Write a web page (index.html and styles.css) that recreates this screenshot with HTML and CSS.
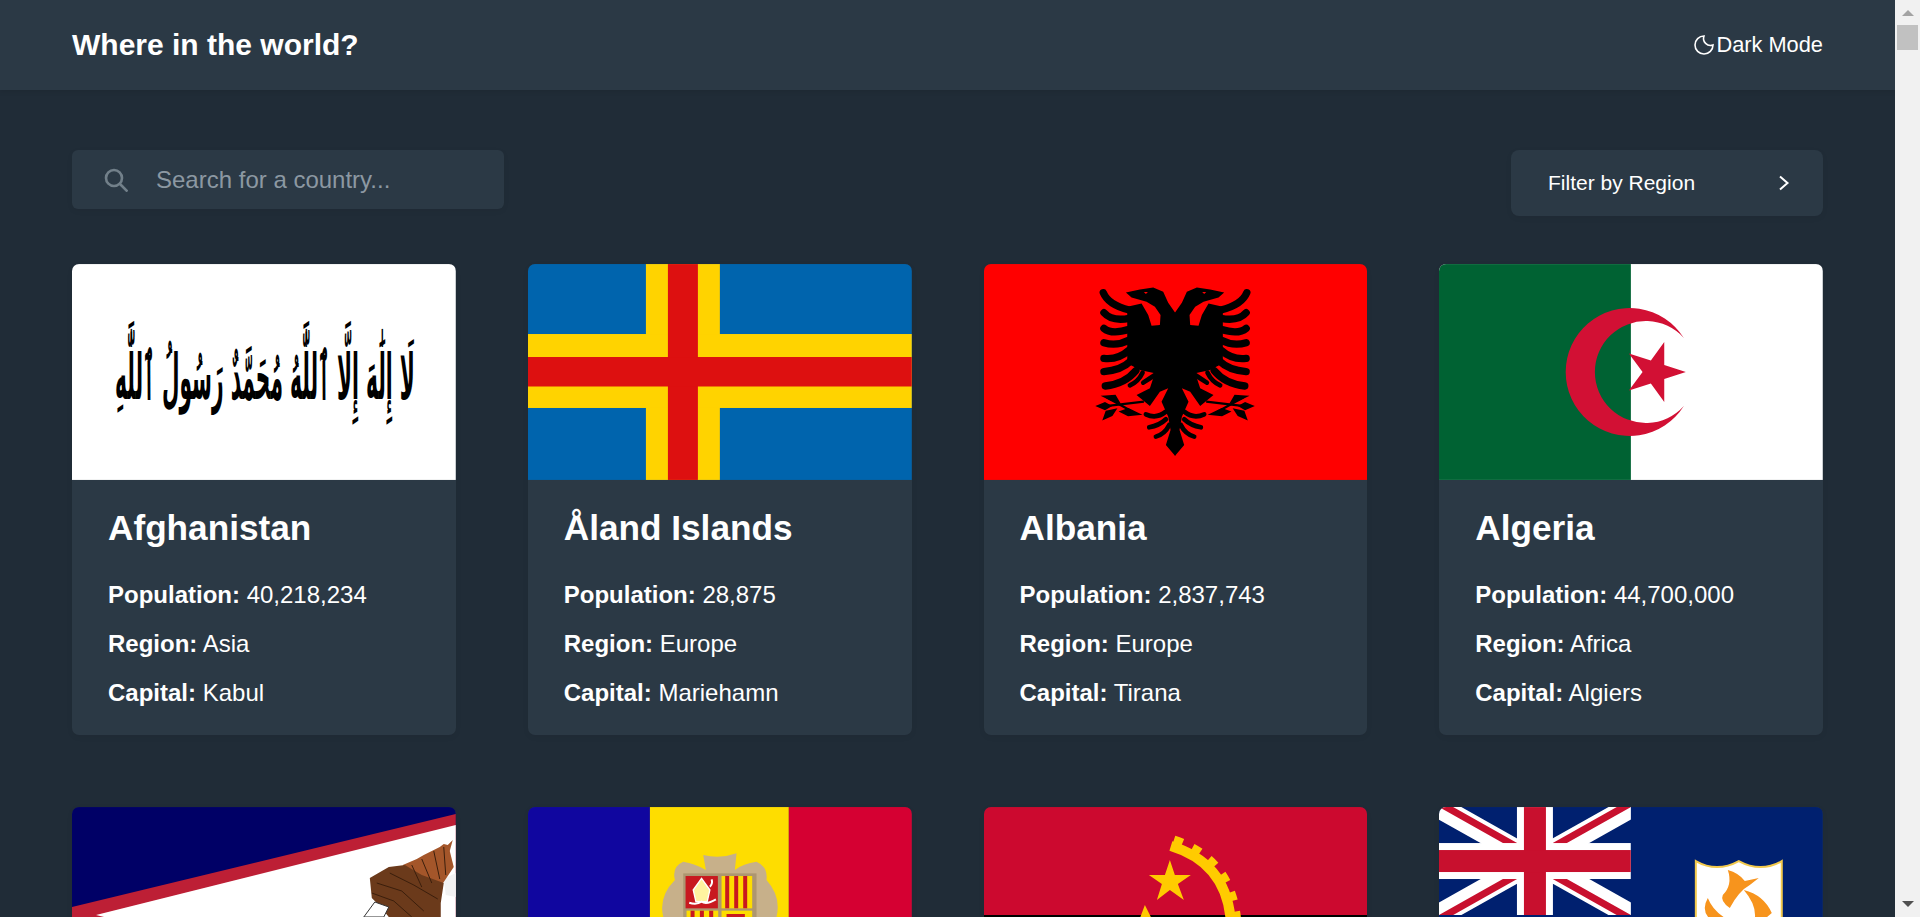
FILE: index.html
```html
<!DOCTYPE html>
<html lang="en">
<head>
<meta charset="utf-8">
<title>Where in the world?</title>
<link rel="stylesheet" href="styles.css">
</head>
<body>
<div class="page">
  <header class="header">
    <h1 class="brand">Where in the world?</h1>
    <button class="mode" type="button">
      <svg class="moon" viewBox="2 2 20 20" aria-hidden="true"><path d="M12 3a9 9 0 1 0 9 9 7 7 0 0 1-9-9z"/></svg>
      <span>Dark Mode</span>
    </button>
  </header>
  <main class="main">
    <div class="toolbar">
      <label class="search">
        <svg class="search-icon" viewBox="0 0 24 24" aria-hidden="true"><circle cx="10" cy="10" r="8"/><path d="M16 16l7.500 7.500"/></svg>
        <input class="search-input" type="text" placeholder="Search for a country...">
      </label>
      <button class="filter" type="button">
        <span>Filter by Region</span>
        <svg class="chevron" viewBox="0 0 12 16" aria-hidden="true"><path d="M2 1.500 9.500 8 2 14.500"/></svg>
      </button>
    </div>
    <section class="grid">

      <article class="card">
        <svg class="flag" viewBox="0 0 384 216" aria-hidden="true">
          <rect width="384" height="216" fill="#fff"/>
          <text class="shahada" text-anchor="middle" textLength="300" lengthAdjust="spacingAndGlyphs" transform="translate(193 135) scale(1 2.120)" direction="rtl">لَا إِلَٰهَ إِلَّا ٱللَّٰهُ مُحَمَّدٌ رَسُولُ ٱللَّٰهِ</text>
        </svg>
        <div class="info">
          <h2 class="name">Afghanistan</h2>
          <p class="row"><b>Population:</b> 40,218,234</p>
          <p class="row"><b>Region:</b> Asia</p>
          <p class="row"><b>Capital:</b> Kabul</p>
        </div>
      </article>

      <article class="card">
        <svg class="flag" viewBox="0 0 384 216" aria-hidden="true">
          <rect width="384" height="216" fill="#0064ad"/>
          <rect x="118" width="74" height="216" fill="#ffd300"/>
          <rect y="70" width="384" height="74" fill="#ffd300"/>
          <rect x="140" width="30" height="216" fill="#dd1010"/>
          <rect y="93" width="384" height="29.500" fill="#dd1010"/>
        </svg>
        <div class="info">
          <h2 class="name">Åland Islands</h2>
          <p class="row"><b>Population:</b> 28,875</p>
          <p class="row"><b>Region:</b> Europe</p>
          <p class="row"><b>Capital:</b> Mariehamn</p>
        </div>
      </article>

      <article class="card">
        <svg class="flag" viewBox="0 0 384 216" aria-hidden="true">
          <rect width="384" height="216" fill="#f00"/>
          <defs>
            <g id="eagle-half">
              <path fill="#000" d="M406 158 385 128 370 95 340 82 300 88 258 97 275 112 320 125 345 140 362 165 360 195 335 197 325 165 305 130 262 140 262 310 300 330 345 340 330 385 290 405 330 438 360 395 385 385 365 425 385 470 392 510 378 555 406 588Z"/>
              <g fill="none" stroke="#000" stroke-width="22" stroke-linecap="round">
                <path d="M190 98Q205 135 268 150"/>
                <path d="M192 158Q215 185 268 175"/>
                <path d="M192 205Q215 225 268 208"/>
                <path d="M192 248Q230 260 268 240"/>
                <path d="M192 295Q235 300 268 270"/>
                <path d="M192 335Q245 330 270 305"/>
                <path d="M196 378Q255 372 288 332"/>
              </g>
              <g fill="none" stroke="#000" stroke-width="14" stroke-linecap="round">
                <path d="M270 376Q295 365 308 338"/>
                <path d="M310 368Q330 355 345 345"/>
                <path d="M318 463Q350 478 378 455"/>
                <path d="M328 502Q358 497 378 478"/>
                <path d="M348 530Q375 522 388 495"/>
              </g>
              <g fill="#000" stroke="#000" stroke-width="7">
                <path d="M312 425 185 440" fill="none"/>
                <path d="M290 462 200 412" fill="none"/>
                <path d="M175 438 195 430 210 438 195 447Z"/>
                <path d="M195 410 225 408 235 425 215 420Z"/>
                <path d="M193 475 200 455 225 450 215 465Z"/>
                <path d="M295 462 265 448 245 455 265 465Z"/>
              </g>
              <path fill="#f00" d="M312 96 324 96 318 102Z"/>
            </g>
          </defs>
          <g transform="translate(56 -4) scale(.33333)">
            <use href="#eagle-half"/>
            <use href="#eagle-half" transform="translate(811 0) scale(-1 1)"/>
          </g>
        </svg>
        <div class="info">
          <h2 class="name">Albania</h2>
          <p class="row"><b>Population:</b> 2,837,743</p>
          <p class="row"><b>Region:</b> Europe</p>
          <p class="row"><b>Capital:</b> Tirana</p>
        </div>
      </article>

      <article class="card">
        <svg class="flag" viewBox="0 0 384 216" aria-hidden="true">
          <rect width="384" height="216" fill="#fff"/>
          <rect width="192" height="216" fill="#006233"/>
          <path fill="#d21034" d="M245 74A64 64 0 1 0 245 142A51 51 0 1 1 245 74Z"/>
          <path fill="#d21034" d="M247 108 225.400 115 225.400 138 212 119.400 190 126.500 203.700 108 190 89.500 212 96.600 225.400 78 225.400 101Z"/>
        </svg>
        <div class="info">
          <h2 class="name">Algeria</h2>
          <p class="row"><b>Population:</b> 44,700,000</p>
          <p class="row"><b>Region:</b> Africa</p>
          <p class="row"><b>Capital:</b> Algiers</p>
        </div>
      </article>

      <article class="card">
        <svg class="flag" viewBox="0 0 384 216" aria-hidden="true">
          <rect width="384" height="216" fill="#000066"/>
          <path fill="#bd1f35" d="M0 100 384 7V209L0 116Z"/>
          <path fill="#fff" d="M24 108 384 18V198Z"/>
          <path fill="#f2f2f2" d="M372 72 384 66V90L374 88Z"/>
          <path fill="#a4562a" d="M381 33 378 44 382 60 370 78 345 80 331 58 345 52 352 48 360 44 368 40 372 37 376 38Z"/>
          <path fill="#6b3a1b" d="M298 71 317 60 333 58 350 68 372 76 369 96 369 110H317L309 100 300 91Z"/>
          <path fill="#fff" stroke="#333" d="M292 110 303 95 317 100 312 110Z"/>
          <g fill="none" stroke="#3a1e0c" stroke-width="1">
            <path d="M340 58 350 80M350 52 360 76M362 44 368 72M372 40 374 68"/>
            <path d="M305 76 330 84 352 104M318 66 342 78 366 92M300 86 322 94 340 110"/>
          </g>
        </svg>
      </article>

      <article class="card">
        <svg class="flag" viewBox="0 0 384 216" aria-hidden="true">
          <rect width="122" height="216" fill="#10069f"/>
          <rect x="122" width="139" height="216" fill="#fedd00"/>
          <rect x="261" width="123" height="216" fill="#d50032"/>
          <g transform="translate(92 33) scale(.33333)">
            <path fill="#c7b08a" d="M250 45Q300 58 350 40L345 90Q370 70 410 65Q445 80 440 120Q485 170 470 231H130Q115 170 165 120Q155 80 190 65Q225 70 258 90Z"/>
            <rect x="190" y="100" width="220" height="140" fill="#ad9670"/>
            <rect x="197" y="108" width="97" height="97" fill="#c8191f"/>
            <path fill="#fff3a0" stroke="#fff" stroke-width="4" d="M245 115 270 150 262 185H228L220 150Z"/>
            <path fill="none" stroke="#fff" stroke-width="6" d="M208 188Q230 195 245 185Q260 195 288 178M270 140Q280 130 275 118"/>
            <rect x="305" y="108" width="92" height="97" fill="#fedd00"/>
            <path fill="#c8191f" d="M316 108h12v97h-12zM343 108h12v97h-12zM370 108h12v97h-12z"/>
            <rect x="200" y="212" width="95" height="30" fill="#fedd00"/>
            <path fill="#c8191f" d="M212 212h12v30h-12zM240 212h12v30h-12zM268 212h12v30h-12z"/>
            <rect x="305" y="212" width="92" height="30" fill="#fedd00"/>
            <path fill="#c8191f" d="M320 222h55v10h-55z"/>
          </g>
        </svg>
      </article>

      <article class="card">
        <svg class="flag" viewBox="0 0 384 216" aria-hidden="true">
          <rect width="384" height="108" fill="#cc092f"/>
          <rect y="108" width="384" height="108" fill="#000"/>
          <g fill="none" stroke="#ffcb00">
            <path stroke-width="10" d="M187 39Q243 56 247 115"/>
            <path stroke-width="9" stroke-dasharray="9 11" d="M190 33Q248 52 253 115"/>
          </g>
          <path fill="#ffcb00" d="M186 53 191 68 207 68 194 77 200 93 186 83 173 93 178 77 165 68 181 68Z"/>
          <path fill="#ffcb00" d="M161 98 155 114 169 114Z"/>
        </svg>
      </article>

      <article class="card">
        <svg class="flag" viewBox="0 0 384 216" aria-hidden="true">
          <defs><clipPath id="jack"><rect width="192" height="108"/></clipPath></defs>
          <rect width="384" height="216" fill="#00206f"/>
          <g clip-path="url(#jack)">
            <path stroke="#fff" stroke-width="22" d="M0 0 192 108M192 0 0 108"/>
            <path stroke="#c8102e" stroke-width="7" d="M0 -4 96 50M192 -4 96 50M0 112 96 58M192 112 96 58"/>
            <rect x="78" width="36" height="108" fill="#fff"/>
            <rect y="36" width="192" height="36" fill="#fff"/>
            <rect x="85" width="22" height="108" fill="#c8102e"/>
            <rect y="43" width="192" height="22" fill="#c8102e"/>
          </g>
          <path fill="#fff" stroke="#f2c94c" stroke-width="2" d="M257 54Q278 66 300 54Q322 66 343 54V130H257Z"/>
          <g fill="#f7941d">
            <path d="M289 63Q300 66 306 74L320 71 311 78Q300 84 291 101 281 94 284 88Q294 78 289 63Z"/>
            <path d="M305 83Q325 88 333 106L326 112H316Q318 98 305 83Z"/>
            <path d="M269 91Q262 103 271 112H288Q274 104 269 91Z"/>
          </g>
        </svg>
      </article>

    </section>
  </main>
</div>
<div class="scrollbar" aria-hidden="true">
  <span class="arrow-up"></span>
  <span class="thumb"></span>
  <span class="track"></span>
  <span class="arrow-down"></span>
</div>
</body>
</html>
```

FILE: styles.css
```css
* { box-sizing: border-box; }

html, body { height: 100%; }

body {
  margin: 0;
  display: flex;
  overflow: hidden;
  background: #202c37;
  color: #fff;
  font-family: "Liberation Sans", Arial, sans-serif;
}

.page {
  flex: 1;
  min-width: 0;
  height: 100vh;
  overflow: hidden;
}

.header {
  height: 90px;
  padding: 0 72px;
  display: flex;
  align-items: center;
  justify-content: space-between;
  background: #2b3945;
  box-shadow: 0 2px 5px rgba(0, 0, 0, .08);
}

.brand {
  margin: 0;
  font-size: 30px;
  font-weight: 700;
}

.mode {
  display: flex;
  align-items: center;
  gap: 2px;
  padding: 0;
  border: 0;
  background: none;
  color: #fff;
  font: 21.8px "Liberation Sans", Arial, sans-serif;
}

.moon {
  width: 20px;
  height: 20px;
  fill: none;
  stroke: #fff;
  stroke-width: 1.6;
}

.main { padding: 60px 72px; }

.toolbar {
  display: flex;
  align-items: flex-start;
  justify-content: space-between;
  margin-bottom: 48px;
}

.search {
  width: 432px;
  height: 59px;
  padding-left: 32px;
  display: flex;
  align-items: center;
  gap: 28px;
  border-radius: 6px;
  background: #2b3945;
  box-shadow: 0 2px 6px rgba(0, 0, 0, .05);
}

.search-icon {
  flex: none;
  width: 24px;
  height: 24px;
  fill: none;
  stroke: #72808a;
  stroke-width: 2.600;
}

.search-input {
  flex: 1;
  min-width: 0;
  padding: 0;
  border: 0;
  outline: 0;
  background: none;
  color: #fff;
  font: 24px "Liberation Sans", Arial, sans-serif;
}

.search-input::placeholder { color: #8c98a2; opacity: 1; }

.filter {
  width: 312px;
  height: 66px;
  padding: 0 33px 0 37px;
  display: flex;
  align-items: center;
  justify-content: space-between;
  border: 0;
  border-radius: 8px;
  background: #2b3945;
  box-shadow: 0 2px 6px rgba(0, 0, 0, .05);
  color: #fff;
  font: 21px "Liberation Sans", Arial, sans-serif;
}

.chevron {
  width: 12px;
  height: 16px;
  fill: none;
  stroke: #fff;
  stroke-width: 2;
}

.grid {
  display: grid;
  grid-template-columns: repeat(4, 1fr);
  gap: 72px;
}

.card {
  overflow: hidden;
  border-radius: 7px;
  background: #2b3945;
  box-shadow: 0 2px 6px rgba(0, 0, 0, .05);
}

.flag {
  display: block;
  width: 100%;
  height: 216px;
}

.shahada {
  font-family: "DejaVu Sans", sans-serif;
  font-size: 30px;
  font-weight: 700;
  fill: #000;
}

.info { padding: 27px 36px 18px; }

.name {
  margin: 0 0 21px;
  font-size: 35.2px;
  line-height: 42px;
  font-weight: 700;
}

.row {
  margin: 0;
  font-size: 24px;
  line-height: 49px;
}

.scrollbar {
  flex: none;
  width: 25px;
  height: 100vh;
  display: flex;
  flex-direction: column;
  align-items: center;
  background: #f1f1f1;
}

.arrow-up {
  margin-top: 10px;
  border: solid transparent;
  border-width: 0 6px 6px;
  border-bottom-color: #a3a3a3;
}

.thumb {
  width: 21px;
  height: 25px;
  margin-top: 9px;
  background: #c1c1c1;
}

.track { flex: 1; }

.arrow-down {
  margin-bottom: 10px;
  border: solid transparent;
  border-width: 6px 6px 0;
  border-top-color: #505050;
}
```
